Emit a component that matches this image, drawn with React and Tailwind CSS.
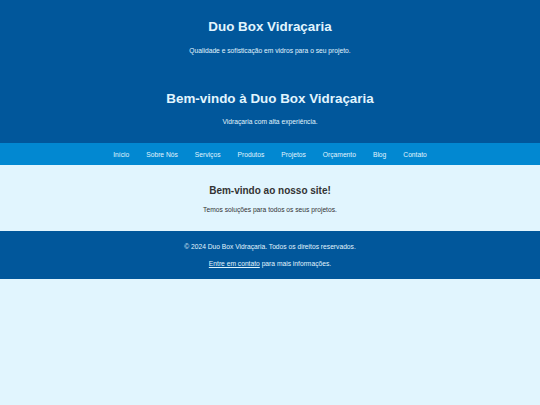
import React from 'react';

const navItems = ['Início', 'Sobre Nós', 'Serviços', 'Produtos', 'Projetos', 'Orçamento', 'Blog', 'Contato'];

const App = () => {
  return (
    <div className="min-h-[405px] bg-[#e1f5fe] text-[6.7px] leading-[9px]" style={{ fontFamily: '"Liberation Sans", Arial, sans-serif' }}>
      {/* Header */}
      <header className="bg-[#01579b] text-[#e1f5fe] text-center pt-[18px] pb-[17px]">
        <h1 className="text-[13.4px] leading-[18px] font-bold">Duo Box Vidraçaria</h1>
        <p className="mt-[10px]">Qualidade e sofisticação em vidros para o seu projeto.</p>
        <h2 className="mt-[35px] text-[13.4px] leading-[18px] font-bold">Bem-vindo à Duo Box Vidraçaria</h2>
        <p className="mt-[9px]">Vidraçaria com alta experiência.</p>
      </header>

      {/* Nav */}
      <nav className="bg-[#0288d1] h-[22px] flex items-center justify-center gap-[17px] text-[#e1f5fe]">
        {navItems.map((item) => (
          <a key={item} href="#">{item}</a>
        ))}
      </nav>

      {/* Main */}
      <main className="text-center text-[#333] pt-[19px] pb-[17px]">
        <h2 className="text-[10px] leading-[14px] font-bold">Bem-vindo ao nosso site!</h2>
        <p className="mt-[7px]">Temos soluções para todos os seus projetos.</p>
      </main>

      {/* Footer */}
      <footer className="bg-[#01579b] text-[#e1f5fe] text-center pt-[11px] pb-[11px]">
        <p>© 2024 Duo Box Vidraçaria. Todos os direitos reservados.</p>
        <p className="mt-[8px]">
          <a href="#" className="underline">Entre em contato</a> para mais informações.
        </p>
      </footer>
    </div>
  );
};

export default App;
